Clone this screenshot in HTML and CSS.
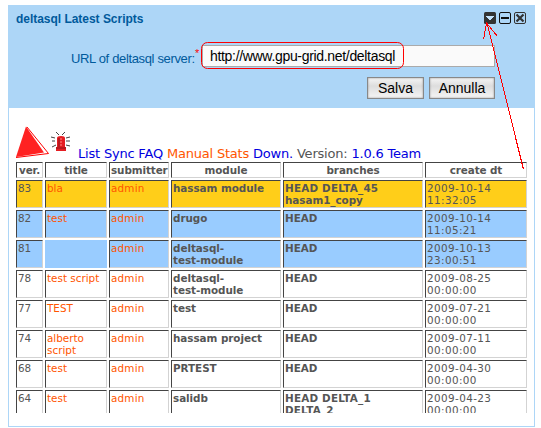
FILE: index.html
```
<!DOCTYPE html>
<html lang="it">
<head>
<meta charset="utf-8">
<title>deltasql Latest Scripts</title>
<link rel="stylesheet" href="styles.css">
</head>
<body>
<section class="gadget">
  <header class="settings">
    <div class="titlebar">
      <h1>deltasql Latest Scripts</h1>
      <svg class="controls" width="44" height="12" viewBox="0 0 44 12">
        <rect width="12" height="12" rx="1.5" fill="#333"/>
        <path d="M2 4h8v1H9v1H8v1H7v1H5V7H4V6H3V5H2z" fill="#c5e3fb"/>
        <rect x="15.500" y=".5" width="11" height="11" rx="1.5" fill="none" stroke="#111"/>
        <path d="M17 5h8v2h-8z" fill="#111"/>
        <rect x="30.500" y=".5" width="11" height="11" rx="1.5" fill="none" stroke="#333"/>
        <path d="M32.500 2.500l7 7m0-7l-7 7" stroke="#333" stroke-width="2.2"/>
      </svg>
    </div>
    <div class="field">
      <label for="url">URL of deltasql server:</label><span class="required">*</span>
      <input id="url" type="text" value="http://www.gpu-grid.net/deltasql">
    </div>
    <div class="actions"><button>Salva</button><button>Annulla</button></div>
  </header>
  <main class="content">
    <nav>
      <svg class="beacon" width="20" height="22" viewBox="0 0 20 22">
        <path d="M6 6q0-2 4-2t4 2v9h1v4H5v-4h1z" fill="#e51d22"/>
        <path d="M8 6v9M5 16h10" stroke="#8e1518"/>
        <path d="M9 7h2M9 10h2M9 13h2" stroke="#ff8a85"/>
        <path d="M5 0l3 3M14 0l-3 3M0 5l4 1M19 5l-4 1M1 9h3M15 9h4M1 15l4-2M19 14l-4-1" stroke="#444" fill="none"/>
      </svg>
      <span class="links"><a>List</a> <a>Sync</a> <a>FAQ</a> <a class="hot">Manual</a> <a class="hot">Stats</a> <a>Down.</a> Version: <a>1.0.6</a> <a>Team</a></span>
    </nav>
    <table>
      <colgroup><col class="c1"><col class="c2"><col class="c3"><col class="c4"><col class="c5"><col class="c6"></colgroup>
      <tr><th>ver.</th><th>title</th><th>submitter</th><th>module</th><th>branches</th><th>create dt</th></tr>
      <tr class="gold"><td>83</td><td>bla</td><td>admin</td><td>hassam module</td><td><span class="caps">HEAD DELTA_45</span><br>hasam1_copy</td><td>2009-10-14<br>11:32:05</td></tr>
      <tr class="blue"><td>82</td><td>test</td><td>admin</td><td>drugo</td><td>HEAD</td><td>2009-10-14<br>11:05:21</td></tr>
      <tr class="blue"><td>81</td><td class="empty"></td><td>admin</td><td>deltasql-<br>test-module</td><td>HEAD</td><td>2009-10-13<br>23:00:51</td></tr>
      <tr><td>78</td><td>test script</td><td>admin</td><td>deltasql-<br>test-module</td><td>HEAD</td><td>2009-08-25<br>00:00:00</td></tr>
      <tr><td>77</td><td>TEST</td><td>admin</td><td>test</td><td>HEAD</td><td>2009-07-21<br>00:00:00</td></tr>
      <tr><td>74</td><td>alberto<br>script</td><td>admin</td><td>hassam project</td><td>HEAD</td><td>2009-07-11<br>00:00:00</td></tr>
      <tr><td>68</td><td>test</td><td>admin</td><td>PRTEST</td><td>HEAD</td><td>2009-04-30<br>00:00:00</td></tr>
      <tr><td>64</td><td>test</td><td>admin</td><td>salidb</td><td><span class="caps">HEAD DELTA_1<br>DELTA_2</span></td><td>2009-04-23<br>00:00:00</td></tr>
    </table>
  </main>
</section>
<svg class="marks" width="541" height="428" viewBox="0 0 541 428">
  <rect x="201.500" y="42.500" width="202" height="26" rx="6"/>
  <path d="M523.500 169.500L487 23M483.500 39.500L486.500 23L497.500 36.500" shape-rendering="crispEdges"/>
  <path class="wedge" d="M26 126.500L44 152.500L16 157z"/>
  <path d="M27 127L48.500 153.500L16 157.500"/>
</svg>
</body>
</html>
```
FILE: styles.css
```
* { box-sizing: border-box; }
body { margin: 0; background: #fff; overflow: hidden; font-family: "Liberation Sans", Arial, sans-serif; }
.gadget { width: 527px; height: 422px; margin: 5px 0 0 8px; border: 1px solid #add6f7; overflow: hidden; }
.settings { height: 102px; background: #add6f7; color: #005a9c; }
.titlebar { display: flex; justify-content: space-between; height: 36px; padding: 6px 6px 0 7px; }
h1 { margin: 0; font-size: 12px; line-height: 14px; font-weight: bold; letter-spacing: -.03px; }
.field { display: flex; height: 25px; padding-left: 62px; }
label { width: 124px; font-size: 13px; line-height: 34px; white-space: nowrap; letter-spacing: -.35px; }
.required { width: 7px; padding-left: 0; color: red; font-size: 11px; line-height: 22px; }
input { width: 293px; height: 22px; margin-top: 3px; padding: 0 7px; border: 1px solid #aaa; background: #fafafa; color: #000; font: 14px "Liberation Sans", Arial, sans-serif; letter-spacing: -.32px; }
.actions { display: flex; justify-content: flex-end; gap: 5px; padding: 10px 39px 0 0; }
button { width: 57px; height: 22px; padding: 0; border: 1px solid #888; background: linear-gradient(#f5f5f5, #ddd 40%, #f5f5f5); color: #000; font: 14px/19px "Liberation Sans", Arial, sans-serif; box-shadow: inset 0 0 2px #888; }
button + button { width: 66px; }
.content { height: 305px; padding: 24px 0 0 5px; overflow: hidden; font-family: "DejaVu Sans", Verdana, sans-serif; color: #555; }
nav { display: flex; height: 28px; padding-left: 37px; gap: 7px; }
.links { font-size: 13px; line-height: 44px; height: 28px; white-space: nowrap; letter-spacing: -.2px; }
nav a { color: #0000e0; }
nav .hot, td:nth-child(2), td:nth-child(3) { color: #ff5500; }
table { width: 515px; table-layout: fixed; border-collapse: separate; border-spacing: 2px; font-size: 10.4px; line-height: 12px; }
.c1 { width: 27px; } .c2 { width: 62px; } .c3 { width: 60px; } .c4 { width: 110px; } .c5 { width: 140px; } .c6 { width: 102px; }
th, td { border: 1px solid; border-color: #444 #d3d3d3 #d3d3d3 #444; padding: 1px; white-space: nowrap; }
th { height: 16px; letter-spacing: -.1px; }
td { height: 28px; vertical-align: top; }
td:nth-child(3) { letter-spacing: .2px; }
td:nth-child(4), td:nth-child(5) { font-weight: bold; letter-spacing: -.05px; }
td:last-child { letter-spacing: .4px; }
.caps { letter-spacing: .2px; }
.gold { background: #ffce19; }
.blue { background: #99ccff; }
.gadget tr { background: none; }
.gold td { background: #ffce19; }
.blue td { background: #99ccff; }
.blue .empty { border-color: #99ccff; }
.marks { position: absolute; inset: 0; fill: none; stroke: red; pointer-events: none; }
.marks .wedge { fill: #ff2222; stroke: none; }
```
